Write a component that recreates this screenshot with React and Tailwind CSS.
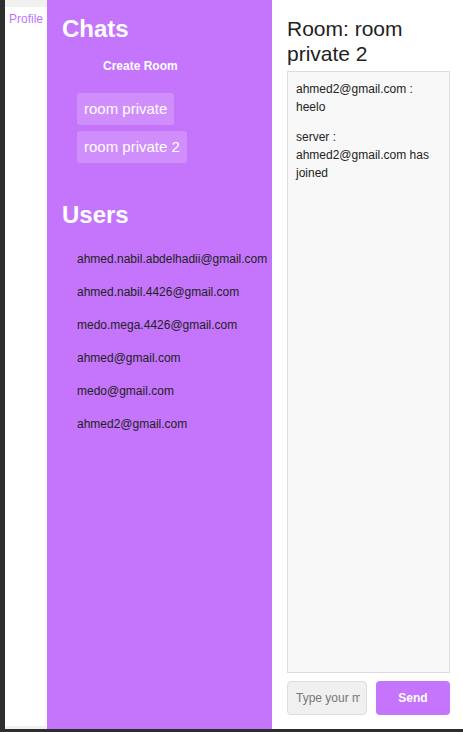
import { useState } from "react";

const users = [
  "ahmed.nabil.abdelhadii@gmail.com",
  "ahmed.nabil.4426@gmail.com",
  "medo.mega.4426@gmail.com",
  "ahmed@gmail.com",
  "medo@gmail.com",
  "ahmed2@gmail.com",
];

const rooms = ["room private", "room private 2"];

const messages = [
  { from: "ahmed2@gmail.com", text: "heelo" },
  { from: "server", text: "ahmed2@gmail.com has joined" },
];

export default function App() {
  const [text, setText] = useState("");

  return (
    <div className="flex h-[732px] w-full bg-[#2e2e2e] pb-[3px] pl-[5px] font-['Liberation_Sans',Arial,sans-serif]">
      {/* profile strip */}
      <div className="flex w-[42px] flex-col bg-white">
        <div className="h-[7px] bg-[#f0f0f0]" />
        <a className="pl-[4px] pt-[5px] text-[12px] leading-[14px] text-[#c174fb]">
          Profile
        </a>
        <div className="flex-1" />
        <div className="h-[3px] bg-[#f0f0f0]" />
      </div>

      {/* sidebar */}
      <div className="flex w-[225px] flex-col bg-[#c475fb] pl-[15px]">
        <h2 className="mt-[15px] text-[24px] font-bold leading-[28px] text-white">
          Chats
        </h2>
        <button className="ml-[41px] mt-[16px] self-start text-[12px] font-bold leading-[14px] text-white">
          Create Room
        </button>
        <div className="ml-[15px] mt-[20px] flex flex-col items-start gap-[6px]">
          {rooms.map((r) => (
            <button
              key={r}
              className="rounded-[3px] bg-[#d08efc] px-[7px] py-[7px] text-[15px] leading-[18px] text-white"
            >
              {r}
            </button>
          ))}
        </div>
        <h2 className="mt-[38px] text-[24px] font-bold leading-[28px] text-white">
          Users
        </h2>
        <ul className="ml-[15px] mt-[14px]">
          {users.map((u) => (
            <li
              key={u}
              className="whitespace-nowrap py-[10px] text-[12px] leading-[13px] text-[#222]"
            >
              {u}
            </li>
          ))}
        </ul>
      </div>

      {/* chat */}
      <div className="flex flex-1 flex-col bg-white pb-[14px] pl-[15px] pr-[13px] pt-[16px]">
        <h1 className="text-[21px] leading-[25px] text-[#222]">
          Room: room private 2
        </h1>
        <div className="mt-[5px] flex-1 border border-[#ddd] bg-[#f8f8f8] p-[8px]">
          {messages.map((m, i) => (
            <p
              key={i}
              className="mb-[12px] text-[12px] leading-[18px] text-[#222]"
            >
              {m.from} : {m.text}
            </p>
          ))}
        </div>
        <div className="mt-[8px] flex gap-[9px]">
          <input
            value={text}
            onChange={(e) => setText(e.target.value)}
            placeholder="Type your message"
            className="h-[34px] w-[80px] rounded-[4px] border border-[#ddd] bg-[#f0f0f0] pl-[8px] pr-[6px] text-[12px] text-[#222] outline-none placeholder:text-[#777]"
          />
          <button className="h-[34px] flex-1 rounded-[4px] bg-[#c475fb] text-[12px] font-bold text-white">
            Send
          </button>
        </div>
      </div>
    </div>
  );
}
